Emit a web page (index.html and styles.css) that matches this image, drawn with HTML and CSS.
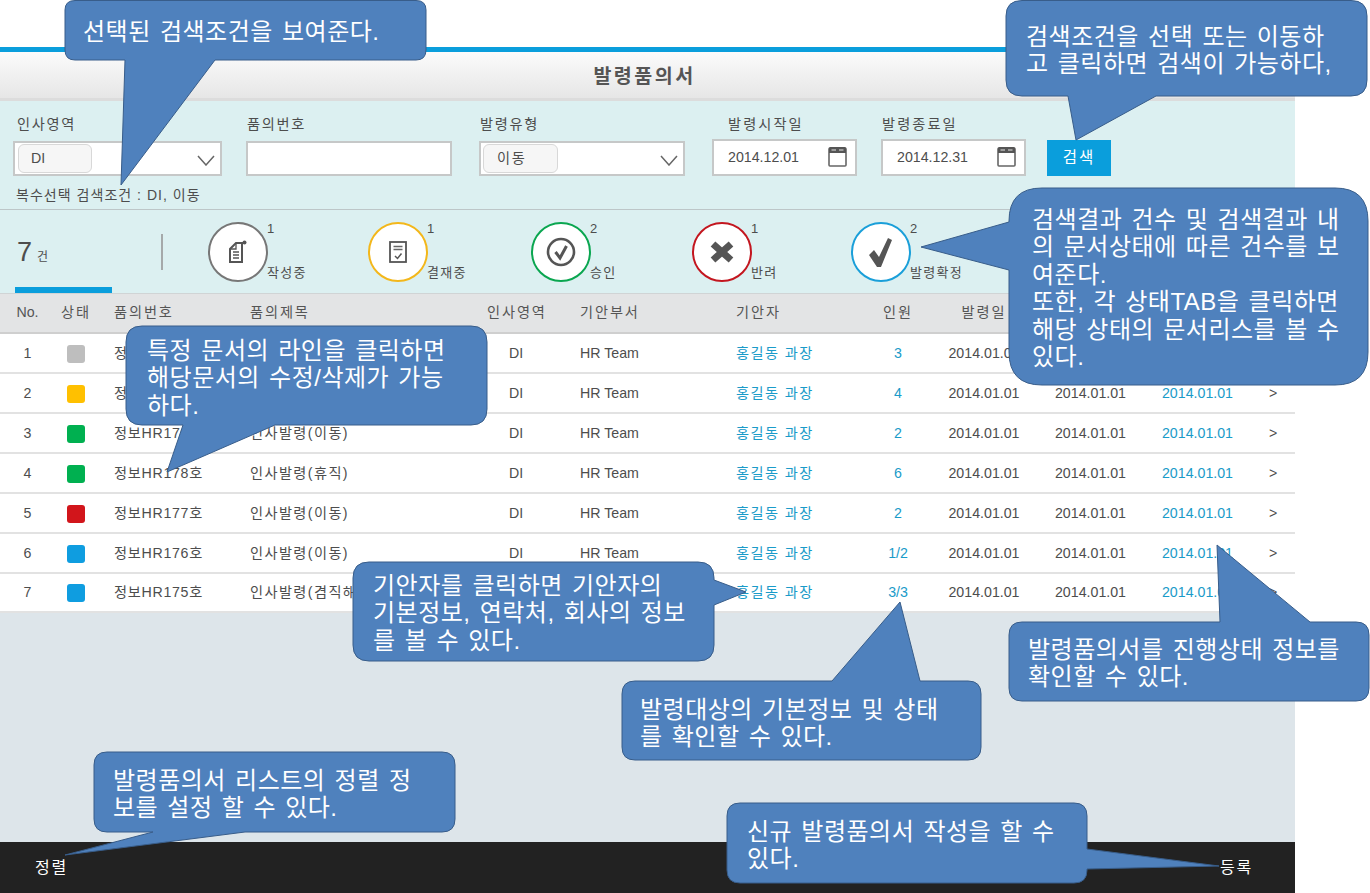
FILE: index.html
```html
<!DOCTYPE html>
<html lang="ko">
<head>
<meta charset="utf-8">
<title>발령품의서</title>
<link rel="stylesheet" href="styles.css">
</head>
<body>
<div class="app">
  <div class="accent"></div>
  <header class="title-bar"><h1>발령품의서</h1></header>

  <section class="search">
    <div class="search-row">
      <div class="field"><label class="fl-a">인사영역</label>
        <div class="box w-a"><span class="pill">DI</span>
          <svg class="chev" viewBox="0 0 18 11"><path d="M1 1l8 9 8-9" fill="none" stroke="#666" stroke-width="1.5"/></svg></div></div>
      <div class="field"><label class="fl-b">품의번호</label>
        <div class="box w-b"></div></div>
      <div class="field"><label class="fl-b">발령유형</label>
        <div class="box w-b"><span class="pill pill-b">이동</span>
          <svg class="chev" viewBox="0 0 18 11"><path d="M1 1l8 9 8-9" fill="none" stroke="#666" stroke-width="1.5"/></svg></div></div>
      <div class="field"><label class="fl-d">발령시작일</label>
        <div class="box date"><span>2014.12.01</span>
          <svg class="cal" viewBox="0 0 19 21"><rect x="1" y="2" width="17" height="18" rx="1" fill="#fff" stroke="#666" stroke-width="1.6"/><path d="M1 7V2.500Q1 1 2.500 1h14Q18 1 18 2.500V7z" fill="#555"/><path d="M3.500 4h4.500M11 4h4.500" stroke="#b5b5b5" stroke-width="1.500"/></svg></div></div>
      <div class="field"><label class="fl-e">발령종료일</label>
        <div class="box date"><span>2014.12.31</span>
          <svg class="cal" viewBox="0 0 19 21"><rect x="1" y="2" width="17" height="18" rx="1" fill="#fff" stroke="#666" stroke-width="1.6"/><path d="M1 7V2.500Q1 1 2.500 1h14Q18 1 18 2.500V7z" fill="#555"/><path d="M3.500 4h4.500M11 4h4.500" stroke="#b5b5b5" stroke-width="1.500"/></svg></div></div>
      <button class="go">검색</button>
    </div>
    <p class="selected">복수선택 검색조건 : DI, 이동</p>
  </section>

  <section class="status">
    <div class="total"><b>7</b><span>건</span></div>
    <div class="divider"></div>
    <div class="tabs">
      <div class="tab"><div class="ring r-gray"><svg viewBox="0 0 24 24"><path d="M10 3h6v19H4V9z" fill="none" stroke="#555" stroke-width="2"/><path d="M4 9h6V3" fill="none" stroke="#555" stroke-width="1.300"/><path d="M7 12h6M7 15h6M7 18h6" stroke="#555" stroke-width="1.400"/><circle cx="18.500" cy="2.500" r="2" fill="#555"/></svg></div><div class="meta"><span>1</span><span>작성중</span></div></div>
      <div class="tab"><div class="ring r-yellow"><svg viewBox="0 0 24 24"><rect x="4" y="2" width="16" height="20" fill="none" stroke="#555" stroke-width="1.800"/><path d="M7.500 6.500h9M7.500 9.500h9" stroke="#666" stroke-width="1.300"/><path d="M9 16l2.500 2.500 4-5" fill="none" stroke="#555" stroke-width="1.500"/></svg></div><div class="meta"><span>1</span><span>결재중</span></div></div>
      <div class="tab"><div class="ring r-green"><svg class="big" viewBox="0 0 30 30"><circle cx="15" cy="15" r="13" fill="none" stroke="#555" stroke-width="2.600"/><path d="M9.500 15l4.500 6 6.500-12" fill="none" stroke="#555" stroke-width="3"/></svg></div><div class="meta"><span>2</span><span>승인</span></div></div>
      <div class="tab"><div class="ring r-red"><svg class="big" viewBox="0 0 30 30"><path d="M6 7l18 16M24 7L6 23" stroke="#555" stroke-width="7"/></svg></div><div class="meta"><span>1</span><span>반려</span></div></div>
      <div class="tab"><div class="ring r-blue"><svg class="big" viewBox="0 0 30 30"><path d="M3 18l5-5 5 7 9-19 4 2-11 27h-4z" fill="#555"/></svg></div><div class="meta"><span>2</span><span>발령확정</span></div></div>
    </div>
  </section>

  <section class="list">
    <div class="row head">
      <div class="c mid">No.</div><div class="c mid">상태</div><div class="c ko pad">품의번호</div><div class="c ko">품의제목</div><div class="c mid">인사영역</div><div class="c ko dept">기안부서</div><div class="c ko">기안자</div><div class="c mid">인원</div><div class="c mid">발령일</div><div class="c"></div><div class="c"></div><div class="c"></div>
    </div>
    <div class="row">
      <div class="c mid">1</div><div class="c mid"><i class="dot gray"></i></div><div class="c pad num">정보HR180호</div><div class="c ko">인사발령(이동)</div><div class="c mid">DI</div><div class="c dept">HR Team</div><div class="c ko link">홍길동 과장</div><div class="c mid link">3</div><div class="c mid">2014.01.01</div><div class="c mid">2014.01.01</div><div class="c mid link">2014.01.01</div><div class="c more">&gt;</div>
    </div>
    <div class="row">
      <div class="c mid">2</div><div class="c mid"><i class="dot yellow"></i></div><div class="c pad num">정보HR179호</div><div class="c ko">인사발령(이동)</div><div class="c mid">DI</div><div class="c dept">HR Team</div><div class="c ko link">홍길동 과장</div><div class="c mid link">4</div><div class="c mid">2014.01.01</div><div class="c mid">2014.01.01</div><div class="c mid link">2014.01.01</div><div class="c more">&gt;</div>
    </div>
    <div class="row">
      <div class="c mid">3</div><div class="c mid"><i class="dot green"></i></div><div class="c pad num">정보HR179호</div><div class="c ko">인사발령(이동)</div><div class="c mid">DI</div><div class="c dept">HR Team</div><div class="c ko link">홍길동 과장</div><div class="c mid link">2</div><div class="c mid">2014.01.01</div><div class="c mid">2014.01.01</div><div class="c mid link">2014.01.01</div><div class="c more">&gt;</div>
    </div>
    <div class="row">
      <div class="c mid">4</div><div class="c mid"><i class="dot green"></i></div><div class="c pad num">정보HR178호</div><div class="c ko">인사발령(휴직)</div><div class="c mid">DI</div><div class="c dept">HR Team</div><div class="c ko link">홍길동 과장</div><div class="c mid link">6</div><div class="c mid">2014.01.01</div><div class="c mid">2014.01.01</div><div class="c mid link">2014.01.01</div><div class="c more">&gt;</div>
    </div>
    <div class="row">
      <div class="c mid">5</div><div class="c mid"><i class="dot red"></i></div><div class="c pad num">정보HR177호</div><div class="c ko">인사발령(이동)</div><div class="c mid">DI</div><div class="c dept">HR Team</div><div class="c ko link">홍길동 과장</div><div class="c mid link">2</div><div class="c mid">2014.01.01</div><div class="c mid">2014.01.01</div><div class="c mid link">2014.01.01</div><div class="c more">&gt;</div>
    </div>
    <div class="row">
      <div class="c mid">6</div><div class="c mid"><i class="dot blue"></i></div><div class="c pad num">정보HR176호</div><div class="c ko">인사발령(이동)</div><div class="c mid">DI</div><div class="c dept">HR Team</div><div class="c ko link">홍길동 과장</div><div class="c mid link">1/2</div><div class="c mid">2014.01.01</div><div class="c mid">2014.01.01</div><div class="c mid link">2014.01.01</div><div class="c more">&gt;</div>
    </div>
    <div class="row">
      <div class="c mid">7</div><div class="c mid"><i class="dot blue"></i></div><div class="c pad num">정보HR175호</div><div class="c ko">인사발령(겸직해제)</div><div class="c mid">DI</div><div class="c dept">HR Team</div><div class="c ko link">홍길동 과장</div><div class="c mid link">3/3</div><div class="c mid">2014.01.01</div><div class="c mid">2014.01.01</div><div class="c mid link">2014.01.01</div><div class="c more">&gt;</div>
    </div>
  </section>

  <footer class="foot"><span>정렬</span><span>등록</span></footer>
</div>

<svg class="shapes" viewBox="0 0 1370 893">
  <path d="M75 .5H416Q426 .5 426 10V50Q426 60 416 60H215L121 185 125 60H75Q65 60 65 50V10Q65 .5 75 .5Z"/>
  <path d="M1022 .5H1351Q1367 .5 1367 16V80Q1367 96 1351 96H1156L1076 140 1068 96H1022Q1006 96 1006 80V16Q1006 .5 1022 .5Z"/>
  <path d="M1042 188H1335Q1368 188 1368 221V352Q1368 385 1335 385H1042Q1009 385 1009 352V270L921 247 1009 222V221Q1009 188 1042 188Z"/>
  <path d="M142 326H471Q487 326 487 342V409Q487 425 471 425H275L167 472 183 425H142Q126 425 126 409V342Q126 326 142 326Z"/>
  <path d="M369 562H698Q714 562 714 578V580L746 592 714 605V645Q714 661 698 661H369Q353 661 353 645V578Q353 562 369 562Z"/>
  <path d="M635 681H832L900 602 920 681H968Q981 681 981 694V747Q981 760 968 760H635Q622 760 622 747V694Q622 681 635 681Z"/>
  <path d="M1022 622H1220L1217 545 1310 622H1356Q1369 622 1369 635V688Q1369 701 1356 701H1022Q1009 701 1009 688V635Q1009 622 1022 622Z"/>
  <path d="M107 752H442Q455 752 455 765V819Q455 832 442 832H245L65 855 153 832H107Q94 832 94 819V765Q94 752 107 752Z"/>
  <path d="M740 803H1074Q1087 803 1087 816V849L1219 866 1087 869V870Q1087 883 1074 883H740Q727 883 727 870V816Q727 803 740 803Z"/>
</svg>

<div class="note n1">선택된 검색조건을 보여준다.</div>
<div class="note n2">검색조건을 선택 또는 이동하<br>고 클릭하면 검색이 가능하다,</div>
<div class="note n3">검색결과 건수 및 검색결과 내<br>의 문서상태에 따른 건수를 보<br>여준다.<br>또한, 각 상태TAB을 클릭하면<br>해당 상태의 문서리스를 볼 수<br>있다.</div>
<div class="note n4">특정 문서의 라인을 클릭하면<br>해당문서의 수정/삭제가 가능<br>하다.</div>
<div class="note n5">기안자를 클릭하면 기안자의<br>기본정보, 연락처, 회사의 정보<br>를 볼 수 있다.</div>
<div class="note n6">발령대상의 기본정보 및 상태<br>를 확인할 수 있다.</div>
<div class="note n7">발령품의서를 진행상태 정보를<br>확인할 수 있다.</div>
<div class="note n8">발령품의서 리스트의 정렬 정<br>보를 설정 할 수 있다.</div>
<div class="note n9">신규 발령품의서 작성을 할 수<br>있다.</div>
</body>
</html>
```

FILE: styles.css
```css
* { box-sizing: border-box; }
html, body { margin: 0; padding: 0; }
body {
  position: relative;
  width: 1370px;
  height: 893px;
  overflow: hidden;
  background: #fff;
  color: #4d4d4d;
  font: 14.2px/1.2 "Liberation Sans", "Noto Sans CJK KR", sans-serif;
}

.app {
  width: 1295px;
  height: 893px;
  padding-top: 47px;
  display: flex;
  flex-direction: column;
}
.accent { height: 5px; background: #0a9edc; }

.title-bar {
  height: 49px;
  padding-top: 3px;
  border-bottom: 3px solid #dcdcdc;
  background: linear-gradient(#fbfbfb, #e6e6e6);
  display: flex;
  align-items: center;
  justify-content: center;
}
.title-bar h1 {
  margin: 0 6px 0 0;
  font-size: 19.5px;
  letter-spacing: 2.5px;
  color: #555;
}

.search {
  height: 109px;
  padding: 14px 0 0 13px;
  background: #dcf0f1;
  border-bottom: 1px solid #bdc6c8;
}
.search-row {
  display: grid;
  grid-template-columns: 233px 233px 233px 169px 166px 64px;
  align-items: end;
  height: 61px;
}
.field { display: flex; flex-direction: column; }
.field label { font-size: 14.2px; letter-spacing: 1.7px; margin-bottom: 8px; line-height: 18px; }
.fl-a { padding-left: 4px; }
.fl-b { padding-left: 1px; }
.field .fl-d { padding-left: 16px; margin-bottom: 6px; letter-spacing: 2.1px; }
.field .fl-e { padding-left: 1px; margin-bottom: 6px; letter-spacing: 2.1px; }
.box {
  height: 35px;
  display: flex;
  align-items: center;
  justify-content: space-between;
  border: 2px solid #c6c8c8;
  background: #fff;
}
.w-a { width: 209px; }
.w-b { width: 206px; }
.pill {
  width: 74px;
  height: 29px;
  margin-left: 3px;
  padding-left: 12px;
  display: flex;
  align-items: center;
  background: #f6f6f6;
  border: 1px solid #d8d8d8;
  border-radius: 6px;
}
.pill-b { width: 75px; margin-left: 2px; padding-left: 13px; letter-spacing: 1.6px; }
.chev { width: 18px; height: 11px; margin: 3px 5px 0 0; }
.date { width: 145px; height: 37px; padding: 0 8px 0 14px; }
.cal { width: 19px; height: 21px; margin-bottom: 2px; }
.go {
  height: 36px;
  border: 0;
  padding: 0;
  background: #0a9edc;
  color: #fff;
  font: inherit;
  font-size: 15.5px;
  letter-spacing: 2px;
}
.selected { margin: 10px 0 0 3px; font-size: 14px; letter-spacing: 1.03px; line-height: 18px; }

.status {
  height: 84px;
  display: flex;
  background: #dcf0f1;
  border-bottom: 1px solid #d0d4d5;
}
.total {
  width: 97px;
  margin-left: 15px;
  padding: 26px 0 0 2px;
  border-bottom: 6px solid #0a9edc;
}
.total b { font-weight: 400; font-size: 27px; line-height: 32px; }
.total span { margin-left: 5px; font-size: 12px; }
.divider { width: 2px; height: 36px; margin: 24px 0 0 49px; background: #a5a9aa; }
.tabs {
  display: grid;
  grid-template-columns: 160px 163px 161px 159px 160px;
  margin: 12px 0 0 45px;
}
.tab { display: flex; height: 60px; }
.ring {
  width: 60px;
  height: 60px;
  flex: none;
  display: flex;
  align-items: center;
  justify-content: center;
  border: 2px solid;
  border-radius: 50%;
  background: #fff;
}
.ring svg { width: 24px; height: 24px; }
.ring svg.big { width: 30px; height: 30px; }
.r-gray { border-color: #777; }
.r-yellow { border-color: #f3b71b; }
.r-green { border-color: #0aa650; }
.r-red { border-color: #c3161f; }
.r-blue { border-color: #1a9fd9; }
.meta {
  display: flex;
  flex-direction: column;
  justify-content: space-between;
  margin-left: -1px;
  padding-bottom: 2px;
  font-size: 13px;
  line-height: 14px;
  letter-spacing: 1.3px;
}

.list { flex: 1; background: #dde5ea; }
.row {
  display: grid;
  grid-template-columns: 55px 42px 153px 237px 58px 191px 124px 76px 96px 117px 97px 49px;
  height: 40px;
  padding-top: 2px;
  align-items: center;
  background: #fff;
  border-bottom: 2px solid #e2e2e2;
}
.row:last-child { height: 39px; padding-top: 0; }
.head {
  padding-top: 0;
  background: #e3e4e5;
  border-bottom: 2px solid #cfcfcf;
  color: #555;
}
.c { white-space: nowrap; min-width: 0; }
.mid { text-align: center; }
.ko { letter-spacing: 1.4px; }
.head .ko, .head .mid { letter-spacing: 1.9px; }
.head .c:first-child { letter-spacing: 0; }
.pad { padding-left: 17px; }
.num { letter-spacing: .7px; }
.dept { padding-left: 35px; }
.link { color: #1a9bc9; }
.more { padding-left: 23px; }
.dot {
  display: block;
  width: 18px;
  height: 18px;
  margin: 0 auto;
  border-radius: 3px;
}
.gray { background: #bebebe; }
.yellow { background: #ffc000; }
.green { background: #00b050; }
.red { background: #d2151b; }
.blue { background: #0f9de0; }

.foot {
  height: 51px;
  display: flex;
  flex: none;
  align-items: center;
  justify-content: space-between;
  padding: 1px 42px 0 35px;
  background: #222;
  color: #fff;
  font-size: 16px;
  letter-spacing: 1.800px;
}

.shapes {
  position: absolute;
  left: 0;
  top: 0;
  width: 1370px;
  height: 893px;
}
.shapes path { fill: #4f81bd; stroke: #385d8a; stroke-width: 1; }

.note {
  position: absolute;
  color: #fff;
  white-space: nowrap;
  font-size: 24px;
  line-height: 27.4px;
  letter-spacing: .5px;
  word-spacing: 2px;
}
.n1 { left: 83px; top: 18px; }
.n2 { left: 1026px; top: 23px; }
.n3 { left: 1032px; top: 206px; }
.n4 { left: 147px; top: 337px; }
.n5 { left: 373px; top: 572px; }
.n6 { left: 640px; top: 696px; }
.n7 { left: 1028px; top: 636px; }
.n8 { left: 113px; top: 767px; }
.n9 { left: 747px; top: 818px; }
```
